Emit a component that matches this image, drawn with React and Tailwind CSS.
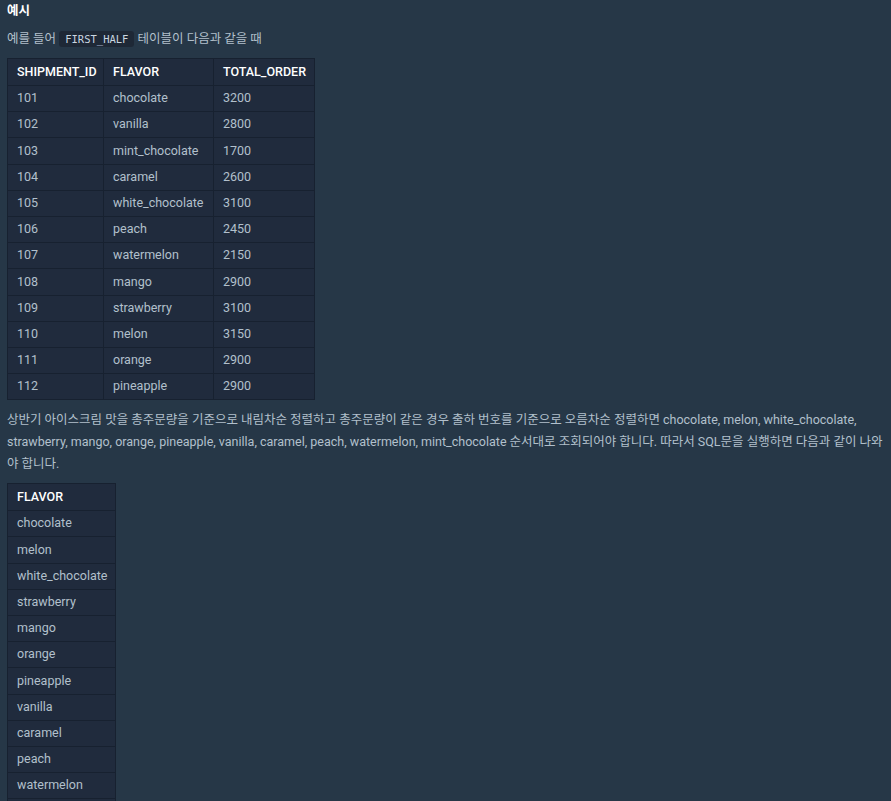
const shipments = [
  ['101', 'chocolate', '3200'],
  ['102', 'vanilla', '2800'],
  ['103', 'mint_chocolate', '1700'],
  ['104', 'caramel', '2600'],
  ['105', 'white_chocolate', '3100'],
  ['106', 'peach', '2450'],
  ['107', 'watermelon', '2150'],
  ['108', 'mango', '2900'],
  ['109', 'strawberry', '3100'],
  ['110', 'melon', '3150'],
  ['111', 'orange', '2900'],
  ['112', 'pineapple', '2900'],
]

const result = [
  'chocolate',
  'melon',
  'white_chocolate',
  'strawberry',
  'mango',
  'orange',
  'pineapple',
  'vanilla',
  'caramel',
  'peach',
  'watermelon',
  'mint_chocolate',
]

const th = 'border border-[#172130] pl-[9px] pr-[8px] h-[27px] text-left font-medium text-white whitespace-nowrap'
const td = 'border border-[#172130] pl-[9px] pr-[8px] h-[26.2px] text-[#b2c0cc] whitespace-nowrap'

export default function App() {
  return (
    <div
      className="h-screen overflow-hidden bg-[#263747] px-[7px] pt-[1px] text-[12.5px] text-[#b2c0cc]"
      style={{ fontFamily: 'Roboto, "Noto Sans CJK KR", sans-serif' }}
    >
      <h5 className="text-[12.5px] font-bold text-white leading-[20px]">예시</h5>

      <p className="mt-[8px] leading-[20px]">
        예를 들어{' '}
        <code className="rounded-[3px] bg-[#1e2836] px-[6px] py-[2px] font-['DejaVu_Sans_Mono',monospace] text-[10.5px] text-[#c9d6e0]">
          FIRST_HALF
        </code>{' '}
        테이블이 다음과 같을 때
      </p>

      <table className="mt-[9px] w-[307px] table-fixed border-collapse bg-[#202b3d]">
        <thead>
          <tr>
            <th className={`${th} w-[96px]`}>SHIPMENT_ID</th>
            <th className={`${th} w-[110px]`}>FLAVOR</th>
            <th className={`${th} w-[101px]`}>TOTAL_ORDER</th>
          </tr>
        </thead>
        <tbody>
          {shipments.map(([id, flavor, total]) => (
            <tr key={id}>
              <td className={td}>{id}</td>
              <td className={td}>{flavor}</td>
              <td className={td}>{total}</td>
            </tr>
          ))}
        </tbody>
      </table>

      <p className="mt-[9px] leading-[22px]">
        상반기 아이스크림 맛을 총주문량을 기준으로 내림차순 정렬하고 총주문량이 같은 경우 출하 번호를 기준으로 오름차순 정렬하면 chocolate, melon, white_chocolate, strawberry, mango, orange, pineapple, vanilla, caramel, peach, watermelon, mint_chocolate 순서대로 조회되어야 합니다. 따라서 SQL문을 실행하면 다음과 같이 나와야 합니다.
      </p>

      <table className="mt-[8px] border-collapse bg-[#202b3d]">
        <thead>
          <tr>
            <th className={th}>FLAVOR</th>
          </tr>
        </thead>
        <tbody>
          {result.map((f) => (
            <tr key={f}>
              <td className={td}>{f}</td>
            </tr>
          ))}
        </tbody>
      </table>
    </div>
  )
}
